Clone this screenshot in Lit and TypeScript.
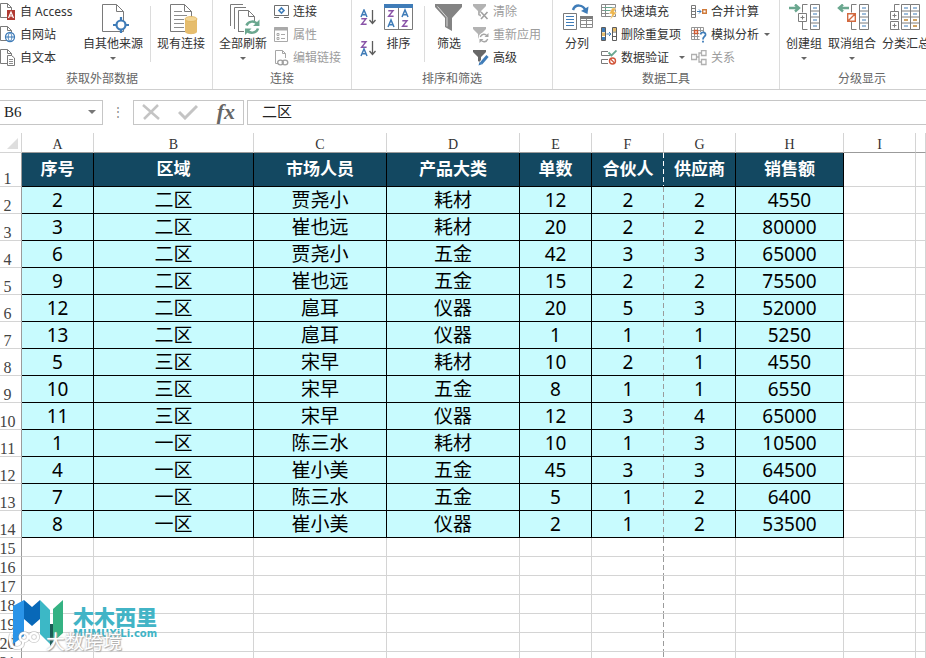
import { LitElement, html, svg, css, nothing } from "lit";
import { customElement, property } from "lit/decorators.js";
import { classMap } from "lit/directives/class-map.js";

const wrap = (w: number, h: number, body: unknown, left = 0) =>
  html`<svg width=${w + left} height=${h} viewBox="${-left} 0 ${w + left} ${h}" fill="none" aria-hidden="true">${body}</svg>`;

const page = (w: number, h: number, fold = 4) =>
  svg`<path d="M.5 .5H${w - fold - 0.5}L${w - 0.5} ${fold + 0.5}V${h - 0.5}H.5Z M${w - fold - 0.5} .5V${fold + 0.5}H${w - 0.5}" stroke="#7a7a7a" fill="#fff"/>`;

const BLUE = "#3f7cb8";
const PURPLE = "#8a54a8";
const GREEN = "#6aa78f";

const letterA = (x: number, y: number) =>
  svg`<path transform="translate(${x} ${y})" d="M0 7L3 0L6 7M1.2 4.8H4.8" stroke=${BLUE} stroke-width="1.5"/>`;
const letterZ = (x: number, y: number) =>
  svg`<path transform="translate(${x} ${y})" d="M.3 .8H5L.6 6.3H5.6" stroke=${PURPLE} stroke-width="1.4"/>`;
const downArrow = svg`<path d="M12.5 1V14M9.5 11L12.5 14.5L15.5 11" stroke="#5c5c5c" stroke-width="1.3"/>`;

const funnel = (fill: string) => svg`<path d="M0 0H13V2L8 7V13L5 11V7L0 2Z" fill=${fill}/>`;

const outline = (x: number) => svg`
  <path d="M${x + 5} .5H${x}V8.5M${x} 17.5V25.5H${x + 5}" stroke="#7d7d7d"/>`;
const ladder = (x: number) => svg`
  <path d="M${x + 0.5} .5H${x + 9.5}V25.5H${x + 0.5}ZM${x + 0.5} 7H${x + 9.5}M${x + 0.5} 13H${x + 9.5}M${x + 0.5} 19H${x + 9.5}" stroke="#7d7d7d" fill="#fff"/>
  <path d="M${x + 3} 4H${x + 7}M${x + 3} 10H${x + 7}M${x + 3} 16H${x + 7}M${x + 3} 22H${x + 7}" stroke=${BLUE}/>`;

const icons: Record<string, unknown> = {
  access: wrap(16, 18, svg`${page(12, 15)}
    <rect x="7" y="7" width="8" height="10" fill="#b03a33"/>
    <path d="M8.500 15L11 9L13.500 15M9.500 13H12.500" stroke="#fff" stroke-width="1.200"/>`),
  web: wrap(16, 18, svg`${page(12, 15)}
    <circle cx="10" cy="11" r="4.5" fill="#fff" stroke=${BLUE} stroke-width="1.3"/>
    <path d="M5.5 11H14.5M10 6.5C7.5 9 7.5 13 10 15.5C12.5 13 12.5 9 10 6.5" stroke=${BLUE}/>`),
  text: wrap(16, 18, svg`${page(12, 15)}
    <path d="M7.500 6.500H11.500L14.500 9V16.500H7.500Z" fill="#fff" stroke="#7a7a7a"/>
    <path d="M9 10.500H13M9 12.500H13M9 14.500H13" stroke="#8d8d8d"/>`),
  other: wrap(28, 30, svg`${page(22, 28, 7)}
    <circle cx="19" cy="21" r="4.500" fill="#fff" stroke=${BLUE} stroke-width="2.200"/>
    <path d="M19 13V17M19 25V29M11 21H15M23 21H27" stroke=${BLUE} stroke-width="2.200"/>`, 6),
  existing: wrap(28, 31, svg`${page(22, 28, 7)}
    <path d="M4 7.500H12M4 11.500H17M4 15.500H14M4 19.500H14M4 23.500H14" stroke="#8d8d8d"/>
    <path d="M15 15V27.500C15 31 27 31 27 27.500V15Z" fill="#e6bd6d"/>
    <ellipse cx="21" cy="15" rx="6" ry="2.500" fill="#f2d596" stroke="#e0b45c" stroke-width=".8"/>`, 6),
  refresh: wrap(30, 32, svg`
    <path d="M.5 22V.5H13M4.500 25V3.500H16" stroke="#7a7a7a"/>
    <path d="M8.500 28V6.500H18.500L24.500 12.500V17M18.500 6.500V12.500H24.500M8.500 27.500H14" stroke="#7a7a7a"/>
    <path d="M16.500 21.500C18 17 25 16 27.500 20.500M28 24.500C26.500 29.500 19.500 30 16.800 26" stroke=${GREEN} stroke-width="2.500"/>
    <path d="M29.500 15.500V22H23ZM15 31V24.500H21.500Z" fill=${GREEN}/>`, 4),
  link: wrap(15, 13, svg`
    <path d="M.5 .5H14.500V10.500H.5Z" stroke="#6f6f6f"/><path d="M0 12.500H5M10 12.500H15" stroke="#6f6f6f"/>
    <path d="M7.500 3L10 5.500L7.500 8L5 5.500Z" stroke=${BLUE} stroke-width="1.600"/>`),
  props: wrap(15, 15, svg`
    <path d="M.5 .5H13.500V14.500H.5Z" stroke="#a9a9a9"/><path d="M0 2H14" stroke="#a9a9a9" stroke-width="3"/>
    <path d="M3 6.500H5V8.500H3ZM3 10.500H5V12.500H3ZM7 7.500H11M7 11.500H11" stroke="#a9a9a9"/>`),
  editlink: wrap(14, 16, svg`
    <path d="M3 13.500H.5V.5H7.500L10.500 3.500V8M7.500 .5V3.500H10.500" stroke="#a6a6a6"/>
    <ellipse cx="5.500" cy="12.500" rx="2.800" ry="2.300" stroke="#a0a0a0" stroke-width="1.300"/><ellipse cx="10" cy="12.500" rx="2.800" ry="2.300" stroke="#a0a0a0" stroke-width="1.300"/>`, 2),
  asc: wrap(16, 17, svg`${letterA(1, 1)}${letterZ(1, 9)}${downArrow}`),
  desc: wrap(16, 17, svg`${letterZ(1, 1)}${letterA(1, 9)}${downArrow}`),
  sort: wrap(29, 26, svg`
    <path d="M.5 .5H28.500V25.500H.5ZM14.500 3V25" stroke="#7a7a7a" fill="#fff"/><rect width="29" height="4" fill=${BLUE}/>
    ${letterZ(4, 6)}${letterA(4, 16)}${letterA(18, 6)}${letterZ(18, 16)}`),
  filter: wrap(28, 28, svg`
    <path d="M0 0H27V3L17 14V27L10 23V14L0 3Z" fill="#838383"/><path d="M2.500 2.500L12 13.500V22.500" stroke="#d8d8d8"/>`),
  clear: wrap(16, 16, svg`${funnel("#b3b3b3")}<path d="M8 8L14.500 15M14.500 8L8 15" stroke="#fff" stroke-width="4"/><path d="M8 8L14.500 15M14.500 8L8 15" stroke="#a0a0a0" stroke-width="1.600"/>`),
  reapply: wrap(16, 16, svg`${funnel("#b3b3b3")}<circle cx="11" cy="11" r="5.500" fill="#fff"/>
    <path d="M7.300 10C8.500 6.500 12.500 6.500 14 9M14.700 12C13.500 15.500 9.500 15.500 8 13" stroke="#a6a6a6" stroke-width="1.400"/>
    <path d="M15.500 6V10H11.500ZM6.500 16V12H10.500Z" fill="#a6a6a6"/>`),
  advanced: wrap(16, 16, svg`${funnel("#686868")}<path d="M7.500 14.500L14 7" stroke="#fff" stroke-width="5"/><path d="M8 13.500L14.500 6" stroke=${BLUE} stroke-width="3"/><path d="M5.500 15.500L6.500 12L9 14.200Z" fill=${BLUE}/>`),
  split: wrap(31, 26, svg`
    <path d="M.5 9.500H13.500V25.500H.5Z" stroke="#7a7a7a"/><path d="M3 12.500H11M3 15.500H11M3 18.500H11M3 21.500H11" stroke=${BLUE}/>
    <path d="M17.500 12.500H29.500V23.500H17.500ZM17 16.500H30M17 20.500H30M23.500 15V23" stroke="#8a8a8a"/><path d="M17 13.500H30" stroke="#7d7d7d" stroke-width="3"/>
    <path d="M10 6C12 0 20 0 23 7" stroke=${BLUE} stroke-width="2.500"/><path d="M25.500 2.500L24.500 10L18 7Z" fill=${BLUE}/>`, 2),
  flash: wrap(16, 16, svg`
    <path d="M.5 .5H14.500V12.500H.5ZM0 3.500H15M0 6.500H15M0 9.500H15M4.500 0V13" stroke="#8a8a8a"/><path d="M3 3.500H12M3 6.500H9" stroke=${GREEN}/>
    <path d="M11 4H15L13 8H16L9 16L11 10H8Z" fill="#edb64e" stroke="#fff" stroke-width=".5"/>`),
  dedupe: wrap(16, 15, svg`
    <path d="M.5 .5H4.500V13.500H.5ZM11.500 .5H15.500V13.500H11.500ZM11 5H16M11 9.500H16" stroke="#5c5c5c"/>
    <path d="M1 1H4V5H1ZM1 10H4V13H1Z" fill=${BLUE}/><path d="M1 5.500H4V9H1ZM12 1H15V4.500H12Z" fill="#e6bd6d"/>
    <path d="M5.500 7H10M8 5L10 7L8 9" stroke=${BLUE}/>`),
  validate: wrap(16, 15, svg`
    <path d="M7 1.500H.5V5.500H9.500M7 9.500H.5V13.500H7" stroke="#7a7a7a"/><path d="M7.500 2.500L10.500 5.500L15.500 .5" stroke=${GREEN} stroke-width="1.800"/>
    <circle cx="11.500" cy="11" r="3" stroke="#d2563a" stroke-width="1.400" fill="#fff"/><path d="M9.500 9L13.500 13" stroke="#d2563a" stroke-width="1.300"/>`),
  consolidate: wrap(16, 14, svg`
    <path d="M.5 .5H4.500V12.500H.5ZM0 3.500H5M0 6.500H5M0 9.500H5" stroke="#7a7a7a"/><path d="M6 6.500H10M8 4.500L10 6.500L8 8.500" stroke=${BLUE}/>
    <path d="M11.700 4.700H15.300V8.300H11.700Z" stroke="#cf7a3a" stroke-width="1.400"/>`),
  whatif: wrap(16, 16, svg`
    <path d="M.5 .5H12.500V12.500H.5ZM0 3.500H13M0 6.500H13M0 9.500H13M3.500 0V13M6.500 0V13M9.500 0V13" stroke="#969696"/><path d="M3.500 3.500H6.500V6.500H3.500Z" stroke="#cf5b33" stroke-width="1.400"/>
    <path d="M8 5H16V16H9Z" fill="#fff"/><path d="M9.500 7.500C10 4.500 15 4.500 14.500 8C14 10 12 9.500 12 12.500M12 13.800V15.500" stroke=${BLUE} stroke-width="1.800"/>`),
  relation: wrap(16, 16, svg`
    <path d="M.5 4.500H5.500V9.500H.5ZM10.500 .5H15V5.500H10.500ZM10.500 9.500H15V14.500H10.500ZM5.500 7H8V3H10.500M8 7V12H10.500" stroke="#b0b0b0" stroke-width="1.300"/>`),
  group: wrap(31, 27, svg`${outline(13.5)}${ladder(21)}
    <path d="M9.500 9.500H17.500V17.500H9.500ZM11.500 13.500H15.500M13.500 11.500V15.500" stroke="#7d7d7d" fill="#fff"/>
    <path d="M0 4H9M6 .5L10 4L6 7.500" stroke=${GREEN} stroke-width="2.400"/>`, 2),
  ungroup: wrap(31, 27, svg`${outline(13.5)}${ladder(21)}
    <path d="M9.700 9.700H17.300V17.300H9.700ZM10 17L17 10" stroke="#d2693f" stroke-width="1.400" fill="#fff"/>
    <path d="M11 4H2M5 .5L1 4L5 7.500" stroke=${GREEN} stroke-width="2.400"/>`, 2),
  subtotal: wrap(31, 27, svg`${outline(4.5)}${ladder(11)}${ladder(20)}
    <path d="M.5 7.500H8.500V15.500H.5ZM2.500 11.500H6.500M4.500 9.500V13.500M.5 17.500H8.500V25.500H.5ZM2.500 21.500H6.500M4.500 19.500V23.500" stroke="#7d7d7d" fill="#fff"/>
    <path d="M14 16H18M23 16H27M23 22H27" stroke="#e09a3e" stroke-width="1.400"/>`),
};

@customElement("ribbon-button")
class RibbonButton extends LitElement {
  @property() icon = "";
  @property() label = "";
  @property({ type: Boolean }) big = false;
  @property({ type: Boolean }) menu = false;
  @property({ type: Boolean }) spread = false;
  @property({ type: Boolean }) disabled = false;

  static styles = css`
    :host { display: block; flex: none; }
    button {
      display: flex; align-items: center; gap: 4px; height: 23px; padding: 0; border: 0;
      background: none; color: #333; white-space: nowrap;
      font: 12px/16px "Noto Sans", "Noto Sans CJK SC", sans-serif;
    }
    button:disabled { color: #9c9c9c; }
    .pic { display: flex; justify-content: center; width: 16px; }
    .caret { width: 0; border: 3px solid transparent; border-top-color: #666; border-bottom: 0; margin-left: 1px; }
    .spread .caret { margin-left: 6px; }
    .big { flex-direction: column; gap: 0; height: auto; }
    .big .pic { width: auto; height: 32px; align-items: flex-start; }
    .big .caret { margin: 5px 0 0; }
  `;

  render() {
    return html`<button class=${classMap({ big: this.big, spread: this.spread })} ?disabled=${this.disabled} aria-label=${this.label || this.icon}>
      <span class="pic">${icons[this.icon]}</span>
      ${this.label ? html`<span>${this.label}</span>` : nothing}
      ${this.menu ? html`<span class="caret"></span>` : nothing}
    </button>`;
  }
}

const columns = ["A", "B", "C", "D", "E", "F", "G", "H", "I", ""];
const heads = ["序号", "区域", "市场人员", "产品大类", "单数", "合伙人", "供应商", "销售额"];
const records = [
  [2, "二区", "贾尧小", "耗材", 12, 2, 2, 4550],
  [3, "二区", "崔也远", "耗材", 20, 2, 2, 80000],
  [6, "二区", "贾尧小", "五金", 42, 3, 3, 65000],
  [9, "二区", "崔也远", "五金", 15, 2, 2, 75500],
  [12, "二区", "扈耳", "仪器", 20, 5, 3, 52000],
  [13, "二区", "扈耳", "仪器", 1, 1, 1, 5250],
  [5, "三区", "宋早", "耗材", 10, 2, 1, 4550],
  [10, "三区", "宋早", "五金", 8, 1, 1, 6550],
  [11, "三区", "宋早", "仪器", 12, 3, 4, 65000],
  [1, "一区", "陈三水", "耗材", 10, 1, 3, 10500],
  [4, "一区", "崔小美", "五金", 45, 3, 3, 64500],
  [7, "一区", "陈三水", "五金", 5, 1, 2, 6400],
  [8, "一区", "崔小美", "仪器", 2, 1, 2, 53500],
];
const blankRows = [15, 16, 17, 18, 19, 20, 21];

@customElement("app-root")
class AppRoot extends LitElement {
  static styles = css`
    :host {
      display: flex; flex-direction: column; position: relative; height: 100vh; overflow: hidden;
      background: #fff; color: #333; font: 12px/16px "Noto Sans", "Noto Sans CJK SC", sans-serif;
    }
    .ribbon { display: flex; flex: none; height: 89px; border-bottom: 1px solid #cfcfcf; overflow: hidden; }
    .set { display: flex; flex-direction: column; flex: none; box-sizing: border-box; border-right: 1px solid #dcdcdc; }
    .set:last-child { border-right: 0; }
    .tools { display: flex; flex: none; height: 70px; }
    .name { text-align: center; color: #666; line-height: 18px; }
    .external { width: 213px; }
    .external .name { padding-right: 8px; }
    .links { width: 139px; }
    .sorting { width: 201px; }
    .data { width: 227px; }
    .outline { width: 164px; }
    .stack { display: flex; flex-direction: column; flex: none; }
    .large { display: flex; flex: none; padding-top: 4px; justify-content: center; }
    .rule { flex: none; width: 1px; height: 56px; margin-top: 6px; background: #dcdcdc; }
    .first { width: 76px; }
    .w74 { width: 74px; }
    .w60 { width: 60px; }
    .w48 { width: 48px; }
    .arrows { gap: 8px; padding: 6px 8px 0 8px; }
    .gap { margin-left: 11px; }
    .wide { width: 90px; }

    .formula { display: flex; flex: none; align-items: center; height: 43px; padding-top: 1px; box-sizing: border-box; }
    .field { box-sizing: border-box; height: 25px; border: 1px solid #c6c6c6; background: #fff; }
    .address { display: flex; align-items: center; width: 103px; border-left: 0; padding: 0 6px 0 4px; }
    .address input { flex: 1; min-width: 0; border: 0; padding: 0; font: 15px/20px "Liberation Serif", serif; color: #222; }
    .caret { border: 4px solid transparent; border-top-color: #777; border-bottom: 0; }
    .dots { width: 30px; text-align: center; color: #888; }
    .actions { display: flex; align-items: center; justify-content: space-between; width: 111px; padding: 0 8px; margin-right: 3px; }
    .actions button { display: flex; padding: 0; border: 0; background: none; }
    .actions .fx { font: italic bold 22px/22px "Liberation Serif", serif; color: #666; }
    .value { flex: 1; min-width: 0; border-right: 0; padding: 0 14px 3px; font: 15px/20px "Noto Sans CJK SC", sans-serif; color: #222; }

    table { width: 100%; table-layout: fixed; border-collapse: separate; border-spacing: 0; }
    .c0 { width: 22px; } .c1 { width: 72px; } .c2 { width: 160px; } .c3 { width: 133px; } .c4 { width: 108px; }
    th, td { padding: 0; box-sizing: border-box; border-right: 1px solid #d4d4d4; border-bottom: 1px solid #d4d4d4; text-align: center; white-space: nowrap; }
    .letters th { height: 20px; border-bottom-color: #9b9b9b; font: 14px/14px "Liberation Serif", serif; vertical-align: bottom; }
    .letters .corner { border-bottom-color: #d4d4d4; }
    .corner svg { display: block; margin: 0 0 3px 7px; }
    .num { padding-right: 6px; border-right-color: #9b9b9b; font: 16px/14px "Liberation Serif", serif; color: #444; vertical-align: bottom; }
    .num span { display: flex; justify-content: center; margin: 0 -4px; }
    .titles > * { height: 34px; }
    .record > * { height: 27px; }
    .blank > * { height: 19px; }
    .title { background-color: #134861; color: #fff; border-color: #000; padding-bottom: 4px; font: bold 17px/20px "Noto Sans CJK SC", sans-serif; }
    .cell { background-color: #c8fbfe; color: #000; border-color: #000; font: 19px/24px "Noto Sans", "Noto Sans CJK SC", sans-serif; }
    .break {
      --dash: #9b9b9b;
      border-right: 0;
      background-image: repeating-linear-gradient(var(--dash) 0 5px, transparent 5px 8px);
      background-position: right top; background-size: 1px 100%; background-repeat: no-repeat;
    }
    .title.break { --dash: #fff; }

    .mark { position: absolute; left: 8px; top: 598px; display: flex; align-items: flex-start; }
    .brand { display: flex; flex-direction: column; margin-left: 10px; color: #42b4c6; }
    .brand b { font: 900 21px/24px "Noto Sans CJK SC", sans-serif; margin-top: 6px; }
    .brand span { font: bold 10px/12px "DejaVu Sans", sans-serif; }
    .credit { position: absolute; left: 8px; top: 627px; display: flex; align-items: center; gap: 4px; color: #fff; font: 19px/28px "Noto Sans CJK SC", sans-serif; text-shadow: 0 0 2px #aaa, 1px 1px 1px #aaa; }
  `;

  private btn(icon: string, label = "", o: { big?: boolean; menu?: boolean; off?: boolean; spread?: boolean } = {}) {
    return html`<ribbon-button icon=${icon} label=${label} ?big=${o.big} ?menu=${o.menu} ?spread=${o.spread} ?disabled=${o.off}></ribbon-button>`;
  }

  private ribbon() {
    const big = { big: true };
    const bigMenu = { big: true, menu: true };
    const off = { off: true };
    return html`<header class="ribbon">
      <section class="set external">
        <div class="tools">
          <div class="stack first">${this.btn("access", "自 Access")}${this.btn("web", "自网站")}${this.btn("text", "自文本")}</div>
          <div class="large w74">${this.btn("other", "自其他来源", bigMenu)}</div>
          <div class="rule"></div>
          <div class="large w60">${this.btn("existing", "现有连接", big)}</div>
        </div>
        <div class="name">获取外部数据</div>
      </section>
      <section class="set links">
        <div class="tools">
          <div class="large w60">${this.btn("refresh", "全部刷新", bigMenu)}</div>
          <div class="stack">${this.btn("link", "连接")}${this.btn("props", "属性", off)}${this.btn("editlink", "编辑链接", off)}</div>
        </div>
        <div class="name">连接</div>
      </section>
      <section class="set sorting">
        <div class="tools">
          <div class="stack arrows">${this.btn("asc")}${this.btn("desc")}</div>
          <div class="large">${this.btn("sort", "排序", big)}</div>
          <div class="rule gap"></div>
          <div class="large w48">${this.btn("filter", "筛选", big)}</div>
          <div class="stack">${this.btn("clear", "清除", off)}${this.btn("reapply", "重新应用", off)}${this.btn("advanced", "高级")}</div>
        </div>
        <div class="name">排序和筛选</div>
      </section>
      <section class="set data">
        <div class="tools">
          <div class="large w48">${this.btn("split", "分列", big)}</div>
          <div class="stack wide">${this.btn("flash", "快速填充")}${this.btn("dedupe", "删除重复项")}${this.btn("validate", "数据验证", { menu: true, spread: true })}</div>
          <div class="stack">${this.btn("consolidate", "合并计算")}${this.btn("whatif", "模拟分析", { menu: true })}${this.btn("relation", "关系", off)}</div>
        </div>
        <div class="name">数据工具</div>
      </section>
      <section class="set outline">
        <div class="tools">
          <div class="large w48">${this.btn("group", "创建组", bigMenu)}</div>
          <div class="large w48">${this.btn("ungroup", "取消组合", bigMenu)}</div>
          <div class="large w60">${this.btn("subtotal", "分类汇总", big)}</div>
        </div>
        <div class="name">分级显示</div>
      </section>
    </header>`;
  }

  private formula() {
    return html`<div class="formula">
      <div class="field address"><input aria-label="名称框" value="B6" /><span class="caret"></span></div>
      <span class="dots">⋮</span>
      <div class="field actions">
        <button aria-label="取消">${wrap(18, 16, svg`<path d="M1 1L17 15M16 1L2 15" stroke="#c4c4c4" stroke-width="2.500"/>`)}</button>
        <button aria-label="输入">${wrap(20, 16, svg`<path d="M1 8L7 14L19 2" stroke="#c4c4c4" stroke-width="3"/>`)}</button>
        <button class="fx" aria-label="插入函数">fx</button>
      </div>
      <input class="field value" aria-label="编辑栏" value="二区" />
    </div>`;
  }

  private tail() {
    return html`<td></td><td></td>`;
  }

  render() {
    return html`${this.ribbon()}${this.formula()}
      <table>
        <colgroup>
          <col class="c0" /><col class="c1" /><col class="c2" /><col class="c3" /><col class="c3" />
          <col class="c1" /><col class="c1" /><col class="c1" /><col class="c4" /><col class="c1" /><col />
        </colgroup>
        <thead>
          <tr class="letters">
            <th class="corner">${wrap(11, 11, svg`<path d="M11 0V11H0Z" fill="#dedede"/>`)}</th>
            ${columns.map((c) => html`<th scope="col">${c}</th>`)}
          </tr>
        </thead>
        <tbody>
          <tr class="titles">
            <th class="num" scope="row"><span>1</span></th>
            ${heads.map((h, i) => html`<td class=${classMap({ title: true, break: i === 5 })}>${h}</td>`)}${this.tail()}
          </tr>
          ${records.map((r, n) => html`<tr class="record">
            <th class="num" scope="row"><span>${n + 2}</span></th>
            ${r.map((v, i) => html`<td class=${classMap({ cell: true, break: i === 5 })}>${v}</td>`)}${this.tail()}
          </tr>`)}
          ${blankRows.map((n) => html`<tr class="blank">
            <th class="num" scope="row"><span>${n}</span></th>
            ${heads.map((_, i) => html`<td class=${classMap({ break: i === 5 })}></td>`)}${this.tail()}
          </tr>`)}
        </tbody>
      </table>
      <div class="mark">
        ${wrap(55, 50, svg`
          <path d="M5 8L16 2V38L5 46Z" fill="#2a94e8"/><path d="M16 2L24 9L32 2V21L24 28L16 21Z" fill="#0868b8"/>
          <path d="M32 2L42 12V46L32 36Z" fill="#3cb8c6"/><path d="M55 2L45 11V44L55 35Z" fill="#35b283"/><path d="M42 26H45V44L42 48Z" fill="#1a5c55"/>`)}
        <div class="brand"><b>木木西里</b><span>MUMUXiLi.com</span></div>
      </div>
      <div class="credit">
        ${wrap(34, 22, svg`<path d="M3 4C1 12 3 18 9 18C15 18 16 13 14 10M12 7A4 4 0 1 1 20 7A4 4 0 1 1 12 7M22 7A4 4 0 1 1 30 7A4 4 0 1 1 22 7" stroke="#999" stroke-width="4" stroke-opacity=".5"/><path d="M3 4C1 12 3 18 9 18C15 18 16 13 14 10M12 7A4 4 0 1 1 20 7A4 4 0 1 1 12 7M22 7A4 4 0 1 1 30 7A4 4 0 1 1 22 7" stroke="#fff" stroke-width="2.500"/>`)}
        <span>大数跨境</span>
      </div>`;
  }
}
